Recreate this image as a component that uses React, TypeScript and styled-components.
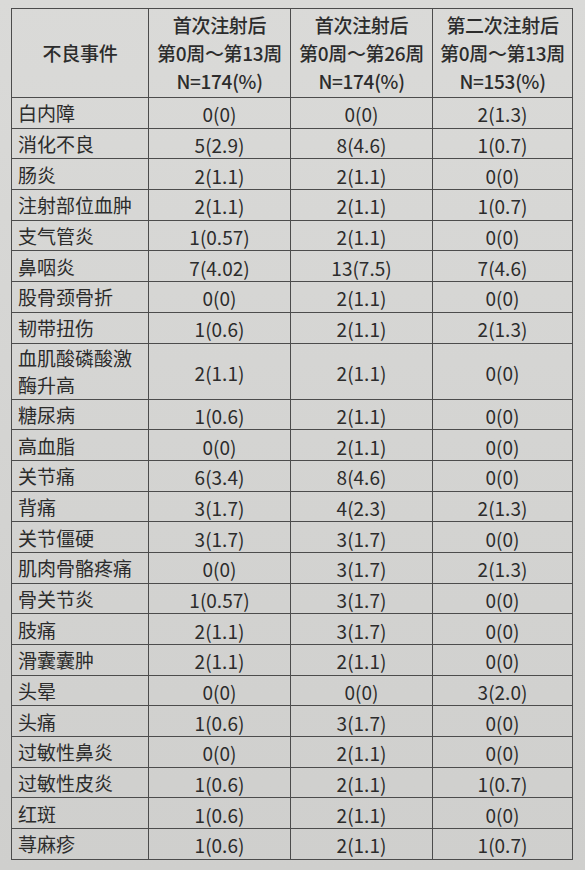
import React from "react";
import styled, { createGlobalStyle } from "styled-components";

const Global = createGlobalStyle`
  html, body { margin: 0; padding: 0; }
  body {
    width: 585px;
    height: 870px;
    overflow: hidden;
    background: linear-gradient(180deg, #dadad8 0%, #d4d4d2 50%, #cfcfcd 100%);
    font-family: "Noto Sans CJK SC", "Noto Sans", sans-serif;
    color: #2c2c2c;
  }
`;

const Page = styled.div`
  padding: 8px 0 0 11px;
`;

const Table = styled.table`
  border-collapse: collapse;
  table-layout: fixed;
  width: 561px;
  font-size: 19px;
`;

const HeadCell = styled.th`
  border: 1.5px solid #4c4c4c;
  height: 88px;
  padding: 0;
  font-weight: 500;
  line-height: 28px;
  text-align: center;
  vertical-align: middle;
  white-space: nowrap;
  letter-spacing: -0.3px;
`;

const Row = styled.tr<{ $tall?: boolean }>`
  height: ${(p) => (p.$tall ? "56px" : "30.7px")};
`;

const LabelCell = styled.td`
  border: 1.5px solid #4c4c4c;
  padding: 0 0 0 6px;
  line-height: 27px;
  text-align: left;
  vertical-align: middle;
  font-weight: 400;
`;

const ValueCell = styled.td`
  border: 1.5px solid #4c4c4c;
  padding: 2px 0 0 0;
  line-height: 27px;
  text-align: center;
  vertical-align: middle;
  font-weight: 400;
`;

type R = [string, string, string, string];

const rows: R[] = [
  ["白内障", "0(0)", "0(0)", "2(1.3)"],
  ["消化不良", "5(2.9)", "8(4.6)", "1(0.7)"],
  ["肠炎", "2(1.1)", "2(1.1)", "0(0)"],
  ["注射部位血肿", "2(1.1)", "2(1.1)", "1(0.7)"],
  ["支气管炎", "1(0.57)", "2(1.1)", "0(0)"],
  ["鼻咽炎", "7(4.02)", "13(7.5)", "7(4.6)"],
  ["股骨颈骨折", "0(0)", "2(1.1)", "0(0)"],
  ["韧带扭伤", "1(0.6)", "2(1.1)", "2(1.3)"],
  ["血肌酸磷酸激\n酶升高", "2(1.1)", "2(1.1)", "0(0)"],
  ["糖尿病", "1(0.6)", "2(1.1)", "0(0)"],
  ["高血脂", "0(0)", "2(1.1)", "0(0)"],
  ["关节痛", "6(3.4)", "8(4.6)", "0(0)"],
  ["背痛", "3(1.7)", "4(2.3)", "2(1.3)"],
  ["关节僵硬", "3(1.7)", "3(1.7)", "0(0)"],
  ["肌肉骨骼疼痛", "0(0)", "3(1.7)", "2(1.3)"],
  ["骨关节炎", "1(0.57)", "3(1.7)", "0(0)"],
  ["肢痛", "2(1.1)", "3(1.7)", "0(0)"],
  ["滑囊囊肿", "2(1.1)", "2(1.1)", "0(0)"],
  ["头晕", "0(0)", "0(0)", "3(2.0)"],
  ["头痛", "1(0.6)", "3(1.7)", "0(0)"],
  ["过敏性鼻炎", "0(0)", "2(1.1)", "0(0)"],
  ["过敏性皮炎", "1(0.6)", "2(1.1)", "1(0.7)"],
  ["红斑", "1(0.6)", "2(1.1)", "0(0)"],
  ["荨麻疹", "1(0.6)", "2(1.1)", "1(0.7)"],
];

const heads = [
  ["首次注射后", "第0周～第13周", "N=174(%)"],
  ["首次注射后", "第0周～第26周", "N=174(%)"],
  ["第二次注射后", "第0周～第13周", "N=153(%)"],
];

export default function App() {
  return (
    <>
      <Global />
      <Page>
        <Table>
          <colgroup>
            <col style={{ width: 137 }} />
            <col style={{ width: 142 }} />
            <col style={{ width: 142 }} />
            <col style={{ width: 140 }} />
          </colgroup>
          <thead>
            <tr>
              <HeadCell>不良事件</HeadCell>
              {heads.map((h, i) => (
                <HeadCell key={i}>
                  {h.map((l, j) => (
                    <div key={j}>{l}</div>
                  ))}
                </HeadCell>
              ))}
            </tr>
          </thead>
          <tbody>
            {rows.map((r, i) => {
              const lines = r[0].split("\n");
              return (
                <Row key={i} $tall={lines.length > 1}>
                  <LabelCell>
                    {lines.map((l, j) => (
                      <div key={j}>{l}</div>
                    ))}
                  </LabelCell>
                  <ValueCell>{r[1]}</ValueCell>
                  <ValueCell>{r[2]}</ValueCell>
                  <ValueCell>{r[3]}</ValueCell>
                </Row>
              );
            })}
          </tbody>
        </Table>
      </Page>
    </>
  );
}
